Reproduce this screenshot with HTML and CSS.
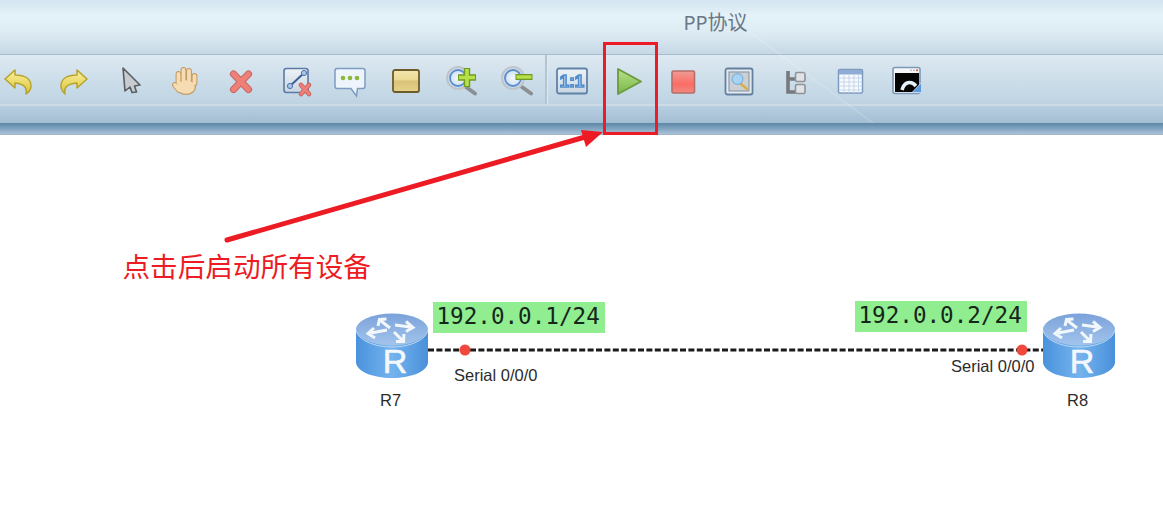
FILE: index.html
```html
<!DOCTYPE html>
<html lang="zh">
<head>
<meta charset="utf-8">
<title>PP协议</title>
<link rel="stylesheet" href="styles.css">
</head>
<body>
<svg class="defs" width="0" height="0" aria-hidden="true">
  <defs>
    <linearGradient id="gYellow" x1="0" y1="0" x2="0" y2="1"><stop offset="0" stop-color="#fbf0a0"/><stop offset="1" stop-color="#dcc436"/></linearGradient>
    <linearGradient id="gBox" x1="0" y1="0" x2="0" y2="1"><stop offset="0" stop-color="#eef3f7"/><stop offset="1" stop-color="#c9d5e0"/></linearGradient>
    <linearGradient id="gTan" x1="0" y1="0" x2="0" y2="1"><stop offset="0" stop-color="#f3e6ae"/><stop offset=".45" stop-color="#ecd994"/><stop offset=".5" stop-color="#d9c27a"/><stop offset="1" stop-color="#e6d28a"/></linearGradient>
    <linearGradient id="gPlay" x1="0" y1="0" x2="0" y2="1"><stop offset="0" stop-color="#b8df8c"/><stop offset="1" stop-color="#78b846"/></linearGradient>
    <linearGradient id="gStop" x1="0" y1="0" x2="0" y2="1"><stop offset="0" stop-color="#ee9c94"/><stop offset=".6" stop-color="#fb6c64"/><stop offset="1" stop-color="#f08a82"/></linearGradient>
    <linearGradient id="gRouterBody" x1="0" y1="0" x2="1" y2="0"><stop offset="0" stop-color="#4a92dc"/><stop offset=".5" stop-color="#74b4ee"/><stop offset="1" stop-color="#4a90da"/></linearGradient>
    <linearGradient id="gRouterTop" x1="0" y1="0" x2="0" y2="1"><stop offset="0" stop-color="#7ba2da"/><stop offset="1" stop-color="#a2c4ec"/></linearGradient>
    <radialGradient id="gLens" cx=".5" cy=".5" r=".5"><stop offset="0" stop-color="#f2f7fc"/><stop offset="1" stop-color="#c4daf0"/></radialGradient>
    <symbol id="router" viewBox="0 0 72 66">
      <path d="M0 16 V49 C0 58 16 65 36 65 S72 58 72 49 V16 Z" fill="url(#gRouterBody)"/>
      <ellipse cx="36" cy="16.5" rx="36" ry="16" fill="url(#gRouterTop)"/>
      <path d="M0 17 C2 27 18 34 36 34 S70 27 72 17" fill="none" stroke="#bcd8f4" stroke-width="1"/>
      <g fill="none" stroke="#f2f7fc" stroke-width="3">
        <path d="M34 15 L25 8 M22 13 L23.5 6.5 L30.5 6"/>
        <path d="M39 12 L54 14 M50 8.5 L57 14.5 L50 18.5"/>
        <path d="M31 17 L15 20 M18 15 L12 20.5 L19 25"/>
        <path d="M38 19 L46 27 M48 21 L47.5 28.5 L40 28.5"/>
      </g>
      <text class="router-letter" x="39" y="60">R</text>
    </symbol>
  </defs>
</svg>

<header class="titlebar"><span class="title">PP协议</span></header>

<nav class="toolbar">
  <div class="tool"><svg class="ico" viewBox="0 0 32 32"><path d="M4 14 L14 5 V10 C24 10 30 14 30 21 C30 24 28 27 25 29 C26 24 25 19 14 18 V23 Z" fill="url(#gYellow)" stroke="#b5a32e" stroke-width="1.5" stroke-linejoin="round"/></svg></div>
  <div class="tool"><svg class="ico" viewBox="0 0 32 32"><path d="M30 14 L20 5 V10 C10 10 4 14 4 21 C4 24 6 27 8 29 C7 24 8 19 20 18 V23 Z" fill="url(#gYellow)" stroke="#b5a32e" stroke-width="1.5" stroke-linejoin="round"/></svg></div>
  <div class="tool"><svg class="ico" viewBox="0 0 32 32"><path d="M11 3 L28 20 L22.5 21 L24.5 27 L20 27.5 L18 22 L13 26 Z" fill="#c8cbcf" stroke="#5a5d62" stroke-width="1.6" stroke-linejoin="round"/></svg></div>
  <div class="tool"><svg class="ico" viewBox="0 0 32 32">
    <g fill="none" stroke-linecap="round" stroke="#c39a62" stroke-width="5.8"><path d="M10.5 18 V9"/><path d="M15.5 15 V5"/><path d="M21 15 V6"/><path d="M26.5 18 V11"/><path d="M7 20 L11 25"/></g>
    <ellipse cx="18" cy="22" rx="10" ry="8" fill="#c39a62"/>
    <g fill="none" stroke-linecap="round" stroke="#f6dcb3" stroke-width="3.8"><path d="M10.5 18 V9"/><path d="M15.5 15 V5"/><path d="M21 15 V6"/><path d="M26.5 18 V11"/><path d="M7 20 L11 25"/></g>
    <ellipse cx="18" cy="22" rx="8.8" ry="6.8" fill="#f6dcb3"/>
  </svg></div>
  <div class="tool"><svg class="ico" viewBox="0 0 32 32"><g stroke-linecap="round"><path d="M10.5 9 L25.5 24.5 M25.5 9 L10.5 24.5" stroke="#c86a66" stroke-width="7.2"/><path d="M10.5 9 L25.5 24.5 M25.5 9 L10.5 24.5" stroke="#ee8078" stroke-width="5"/></g></svg></div>
  <div class="tool"><svg class="ico" viewBox="0 0 32 32">
    <rect x="5" y="3.5" width="24" height="24" rx="2.5" fill="url(#gBox)" stroke="#5b7ba6" stroke-width="1.6"/>
    <path d="M11 21 L25 8" stroke="#3c5f98" stroke-width="2"/>
    <circle cx="11" cy="21" r="2.6" fill="#a9c4e8" stroke="#4d74ac"/><circle cx="25" cy="8" r="2.6" fill="#a9c4e8" stroke="#4d74ac"/>
    <path d="M22 20 L30 29 M30 20 L22 29" stroke="#c4605c" stroke-width="4.6" stroke-linecap="round"/><path d="M22 20 L30 29 M30 20 L22 29" stroke="#ee8078" stroke-width="2.8" stroke-linecap="round"/>
  </svg></div>
  <div class="tool"><svg class="ico" viewBox="0 0 32 32">
    <path d="M3 3.5 H29 Q31 3.5 31 6 V21 Q31 23.5 29 23.5 H23.5 L22.5 31 L17 23.5 H3 Q1 23.5 1 21 V6 Q1 3.5 3 3.5 Z" fill="#eef4fb" stroke="#7e9cc2" stroke-width="1.5"/>
    <circle cx="9" cy="13" r="2.3" fill="#8ab838"/><circle cx="16" cy="13" r="2.3" fill="#8ab838"/><circle cx="23" cy="13" r="2.3" fill="#8ab838"/>
  </svg></div>
  <div class="tool"><svg class="ico" viewBox="0 0 32 32"><rect x="3" y="5" width="26" height="22" rx="2" fill="url(#gTan)" stroke="#6d5b2c" stroke-width="1.8"/></svg></div>
  <div class="tool"><svg class="ico" viewBox="0 0 32 32">
    <path d="M21 22 L30 28.5" stroke="#8c8f92" stroke-width="4" stroke-linecap="round"/>
    <circle cx="13" cy="13" r="11" fill="url(#gLens)" stroke="#bfc4c8" stroke-width="2"/><circle cx="13" cy="13" r="8" fill="none" stroke="#5c8ccc" stroke-width="1.8"/>
    <path d="M13 12.5 H31 M22 3 V22" stroke="#6e9c20" stroke-width="6.4"/><path d="M14 12.5 H30 M22 4 V21" stroke="#b8e04a" stroke-width="3.6"/>
  </svg></div>
  <div class="tool"><svg class="ico" viewBox="0 0 32 32">
    <path d="M21 22 L30 28.5" stroke="#8c8f92" stroke-width="4" stroke-linecap="round"/>
    <circle cx="12" cy="13" r="11" fill="url(#gLens)" stroke="#bfc4c8" stroke-width="2"/><circle cx="12" cy="13" r="8" fill="none" stroke="#5c8ccc" stroke-width="1.8"/>
    <path d="M14.5 12 H31.5" stroke="#6e9c20" stroke-width="6"/><path d="M15.5 12 H30.5" stroke="#b8e04a" stroke-width="3.4"/>
  </svg></div>
  <div class="tool tool-sep"><svg class="ico" viewBox="0 0 32 32">
    <rect x="1" y="3.5" width="30" height="25" rx="2" fill="url(#gBox)" stroke="#5f82a8" stroke-width="1.8"/>
    <text class="ratio" x="16" y="22">1:1</text>
  </svg></div>
  <div class="tool"><svg class="ico" viewBox="0 0 32 32"><path d="M6 4 L29 16.5 L6 29 Z" fill="url(#gPlay)" stroke="#6c9a3e" stroke-width="1.8" stroke-linejoin="round"/></svg></div>
  <div class="tool"><svg class="ico" viewBox="0 0 32 32"><rect x="5" y="6" width="22.5" height="22" rx="1.5" fill="url(#gStop)" stroke="#b56d68" stroke-width="1.6"/></svg></div>
  <div class="tool"><svg class="ico" viewBox="0 0 32 32">
    <rect x="2.5" y="3.5" width="27" height="26" rx="2" fill="#e6ebf0" stroke="#64809f" stroke-width="1.8"/>
    <rect x="6" y="7" width="20" height="19" fill="#ccd0d2" stroke="#8a9bb0" stroke-width="1.2"/>
    <path d="M18 19 L24 24" stroke="#d8b04a" stroke-width="2.6" stroke-linecap="round"/>
    <circle cx="14.5" cy="14" r="5.4" fill="#a6d4f4" stroke="#7eb0d8" stroke-width="1.2"/>
  </svg></div>
  <div class="tool"><svg class="ico" viewBox="0 0 32 32">
    <path d="M10 6 V27 H18 M10 14 H18" fill="none" stroke="#76797d" stroke-width="3.6"/>
    <rect x="17.5" y="7.5" width="9.5" height="9" rx="1.5" fill="#dfe3e6" stroke="#8f9296" stroke-width="1.6"/>
    <rect x="17.5" y="19.5" width="9.5" height="9" rx="1.5" fill="#dfe3e6" stroke="#8f9296" stroke-width="1.6"/>
  </svg></div>
  <div class="tool"><svg class="ico" viewBox="0 0 32 32">
    <rect x="4.5" y="4.5" width="24" height="23.5" rx="1.5" fill="#f8fafd" stroke="#7d9bc0" stroke-width="1.5"/>
    <rect x="5" y="5" width="23" height="4.5" fill="#8fadd4"/>
    <path d="M5 13 H28 M5 17 H28 M5 21 H28 M5 25 H28 M10 10 V28 M15 10 V28 M20 10 V28 M24.5 10 V28" stroke="#c6d6ea" stroke-width="1"/>
  </svg></div>
  <div class="tool"><svg class="ico" viewBox="0 0 32 32">
    <rect x="4" y="2.5" width="27" height="26" rx="2" fill="#f4f6f9" stroke="#7d97b8" stroke-width="1.6"/>
    <rect x="6" y="8" width="24" height="19" fill="#050505"/>
    <circle cx="28" cy="5.3" r="1" fill="#e04040"/><circle cx="25" cy="5.3" r=".8" fill="#9aa0a8"/><circle cx="22" cy="5.3" r=".8" fill="#9aa0a8"/>
    <path d="M13 25 C15 17 22 15 27 21" fill="none" stroke="#e8f2fb" stroke-width="3.6"/>
    <path d="M23 27.5 H32.5 V17.5 Z" fill="#5b9bdc" stroke="#cfe2f6" stroke-width=".8"/>
  </svg></div>
</nav>

<div class="band"></div>
<div class="band-dark"></div>

<main class="canvas">
  <svg class="link" width="1163" height="386" aria-hidden="true">
    <line class="link-line" x1="428" y1="215" x2="1043" y2="215"/>
    <circle class="port" cx="465" cy="215" r="5.5"/>
    <circle class="port" cx="1022" cy="215" r="5.5"/>
  </svg>

  <div class="ip ip-left">192.0.0.1/24</div>
  <div class="ip ip-right">192.0.0.2/24</div>

  <svg class="router router-left"><use href="#router"/></svg>
  <svg class="router router-right"><use href="#router"/></svg>

  <div class="label port-left">Serial 0/0/0</div>
  <div class="label port-right">Serial 0/0/0</div>
  <div class="label name-left">R7</div>
  <div class="label name-right">R8</div>

  <div class="note">点击后启动所有设备</div>
</main>

<svg class="overlay" width="1163" height="521" aria-hidden="true">
  <path d="M747 30 L873 123" stroke="#ffffff" stroke-opacity=".18" stroke-width="1.5"/>
  <path d="M227 240 L585 137" stroke="#ed1c24" stroke-width="5" stroke-linecap="round"/>
  <path d="M603 132 L581 130 L586 147 Z" fill="#ed1c24"/>
</svg>
<div class="highlight"></div>
</body>
</html>
```

FILE: styles.css
```css
* { box-sizing: border-box; }

html, body {
  margin: 0;
  padding: 0;
}

body {
  position: relative;
  width: 1163px;
  height: 521px;
  display: flex;
  flex-direction: column;
  overflow: hidden;
  background: #ffffff;
  font-family: "Liberation Sans", "Noto Sans CJK SC", sans-serif;
}

.defs { position: absolute; }

.titlebar {
  height: 55px;
  flex: none;
  padding: 10px 0 0 268px;
  display: flex;
  justify-content: center;
  align-items: flex-start;
  background: linear-gradient(#d3e5f0 0, #e5f2f9 30%, #dbe9f2 65%, #c7d9e6 98%);
  border-bottom: 1px solid #a9bccb;
}

.title {
  font-family: "Noto Sans", "Noto Sans CJK SC", sans-serif;
  font-size: 20px;
  line-height: 26px;
  color: #6a7886;
}

.toolbar {
  height: 51px;
  flex: none;
  padding: 2px 0 0 1px;
  display: flex;
  align-items: center;
  gap: 23.5px;
  background: linear-gradient(#dde9f1, #bed3e3);
  border-bottom: 2px solid #cfdbe4;
}

.tool {
  position: relative;
  width: 32px;
  height: 32px;
  flex: none;
}

.tool-sep::before {
  content: "";
  position: absolute;
  left: -11px;
  top: -10px;
  width: 2px;
  height: 49px;
  background: #b4c5d2;
  border-right: 1px solid #dfe9f0;
}

.ico {
  display: block;
  width: 32px;
  height: 32px;
  overflow: visible;
  filter: blur(0.5px);
}

.ratio {
  font-family: "Liberation Sans", sans-serif;
  font-weight: 700;
  font-size: 17px;
  text-anchor: middle;
  fill: #f2f6fa;
  stroke: #4f8ccb;
  stroke-width: 1.6px;
}

.band {
  height: 17px;
  flex: none;
  background: linear-gradient(#b7cfe1, #a3bdd3);
}

.band-dark {
  height: 12px;
  flex: none;
  background: linear-gradient(#5b87a6, #7fa3bf 45%, #a9c1d6 90%, #a0b1c3);
}

.canvas {
  position: relative;
  flex: 1;
  background: #ffffff;
}

.link {
  position: absolute;
  left: 0;
  top: 0;
}

.link-line {
  stroke: #1a1a1a;
  stroke-width: 3;
  stroke-dasharray: 6 2.4;
}

.port { fill: #f2473c; }

.ip {
  position: absolute;
  width: 172px;
  height: 31px;
  padding-left: 3.5px;
  background: #90ee90;
  color: #16261a;
  font-family: "DejaVu Sans Mono", monospace;
  font-size: 22.6px;
  line-height: 29px;
  white-space: nowrap;
}

.ip-left { left: 433px; top: 167px; }
.ip-right { left: 855px; top: 166px; }

.router {
  position: absolute;
  width: 72px;
  height: 66px;
}

.router-letter {
  font-family: "Liberation Sans", sans-serif;
  font-size: 34px;
  text-anchor: middle;
  fill: #f4f8fc;
  stroke: #f4f8fc;
  stroke-width: .6px;
}

.router-left { left: 356px; top: 178px; }
.router-right { left: 1043px; top: 178px; }

.label {
  position: absolute;
  color: #2b2b2b;
  font-size: 16.5px;
  line-height: 18px;
  white-space: nowrap;
}

.port-left { left: 454px; top: 231px; }
.port-right { left: 951px; top: 222px; }
.name-left { left: 380px; top: 256px; }
.name-right { left: 1067px; top: 256px; }

.note {
  position: absolute;
  left: 122.5px;
  top: 111px;
  color: #ed1c24;
  font-family: "Noto Sans CJK SC", sans-serif;
  font-size: 27.6px;
  line-height: 38px;
  white-space: nowrap;
}

.overlay {
  position: absolute;
  left: 0;
  top: 0;
  pointer-events: none;
}

.highlight {
  position: absolute;
  left: 603px;
  top: 42px;
  width: 55px;
  height: 93px;
  border: 3px solid #ed1c24;
}
```
